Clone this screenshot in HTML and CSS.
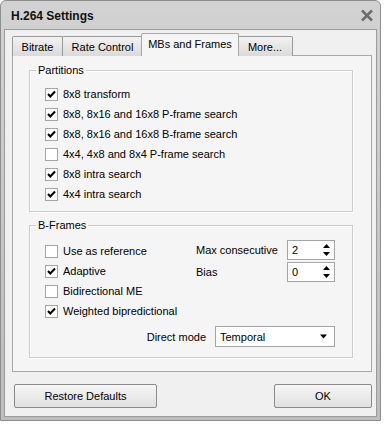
FILE: index.html
```html
<!DOCTYPE html>
<html>
<head>
<meta charset="utf-8">
<link rel="stylesheet" href="styles.css">
</head>
<body>
<div class="window">
  <div class="titlebar">
    <span class="title">H.264 Settings</span>
    <svg class="close" width="14" height="13" viewBox="0 0 14 13"><path d="M2 1.5 L12 11.5 M12 1.5 L2 11.5" stroke="#6e6e6e" stroke-width="2.6" fill="none"/></svg>
  </div>
  <div class="client">
    <div class="tabs">
      <div class="tab t1">Bitrate</div>
      <div class="tab t2">Rate Control</div>
      <div class="tab t3 sel">MBs and Frames</div>
      <div class="tab t4">More...</div>
    </div>
    <div class="panel">
      <fieldset class="group g1">
        <legend>Partitions</legend>
        <div class="rows">
          <label class="cb"><span class="box on"><svg width="11" height="11" viewBox="0 0 11 11"><path d="M2 5 L4.3 7.5 L9 2.5" stroke="#000" stroke-width="2" fill="none"/></svg></span>8x8 transform</label>
          <label class="cb"><span class="box on"><svg width="11" height="11" viewBox="0 0 11 11"><path d="M2 5 L4.3 7.5 L9 2.5" stroke="#000" stroke-width="2" fill="none"/></svg></span>8x8, 8x16 and 16x8 P-frame search</label>
          <label class="cb"><span class="box on"><svg width="11" height="11" viewBox="0 0 11 11"><path d="M2 5 L4.3 7.5 L9 2.5" stroke="#000" stroke-width="2" fill="none"/></svg></span>8x8, 8x16 and 16x8 B-frame search</label>
          <label class="cb"><span class="box"></span>4x4, 4x8 and 8x4 P-frame search</label>
          <label class="cb"><span class="box on"><svg width="11" height="11" viewBox="0 0 11 11"><path d="M2 5 L4.3 7.5 L9 2.5" stroke="#000" stroke-width="2" fill="none"/></svg></span>8x8 intra search</label>
          <label class="cb"><span class="box on"><svg width="11" height="11" viewBox="0 0 11 11"><path d="M2 5 L4.3 7.5 L9 2.5" stroke="#000" stroke-width="2" fill="none"/></svg></span>4x4 intra search</label>
        </div>
      </fieldset>
      <fieldset class="group g2">
        <legend>B-Frames</legend>
        <div class="bcols">
          <div class="rows left">
            <label class="cb"><span class="box"></span>Use as reference</label>
            <label class="cb"><span class="box on"><svg width="11" height="11" viewBox="0 0 11 11"><path d="M2 5 L4.3 7.5 L9 2.5" stroke="#000" stroke-width="2" fill="none"/></svg></span>Adaptive</label>
            <label class="cb"><span class="box"></span>Bidirectional ME</label>
            <label class="cb"><span class="box on"><svg width="11" height="11" viewBox="0 0 11 11"><path d="M2 5 L4.3 7.5 L9 2.5" stroke="#000" stroke-width="2" fill="none"/></svg></span>Weighted bipredictional</label>
          </div>
          <div class="right">
            <div class="field"><span>Max consecutive</span><div class="spin"><span>2</span><svg width="9" height="14" viewBox="0 0 9 14"><path d="M4.5 1 L8 5 L1 5 Z M1 9 L8 9 L4.5 13 Z" fill="#000"/></svg></div></div>
            <div class="field"><span>Bias</span><div class="spin"><span>0</span><svg width="9" height="14" viewBox="0 0 9 14"><path d="M4.5 1 L8 5 L1 5 Z M1 9 L8 9 L4.5 13 Z" fill="#000"/></svg></div></div>
          </div>
        </div>
        <div class="direct">
          <span>Direct mode</span>
          <div class="select"><span>Temporal</span><svg width="9" height="5" viewBox="0 0 9 5"><path d="M1 0.5 L8 0.5 L4.5 4.5 Z" fill="#000"/></svg></div>
        </div>
      </fieldset>
    </div>
    <div class="buttons">
      <button class="btn restore">Restore Defaults</button>
      <button class="btn ok">OK</button>
    </div>
  </div>
</div>
</body>
</html>
```

FILE: styles.css
```css
html, body {
  margin: 0;
  padding: 0;
  background: #ffffff;
}
body {
  font-family: "Liberation Sans", Arial, sans-serif;
  font-size: 11px;
  color: #000;
}
.window {
  width: 381px;
  height: 421px;
  box-sizing: border-box;
  background: linear-gradient(#d2d2d2, #bdbdbd);
  border: 1px solid #8e8e8e;
  border-radius: 6px 6px 0 0;
  padding: 0 3px 3px 3px;
  display: flex;
  flex-direction: column;
}
.titlebar {
  height: 28px;
  display: flex;
  align-items: center;
  justify-content: space-between;
  padding: 0 3px 0 7px;
  flex: none;
}
.title {
  font-weight: bold;
  font-size: 12px;
  color: #111;
  margin-top: 1px;
}
.close {
  margin-top: 1px;
}
.client {
  flex: 1;
  background: #f0f0f0;
  border: 1px solid #9b9b9b;
  padding: 4px 3px 0 7px;
  display: flex;
  flex-direction: column;
}
.tabs {
  display: flex;
  align-items: flex-end;
  height: 22px;
  margin-bottom: -1px;
  position: relative;
  z-index: 1;
}
.tab {
  box-sizing: border-box;
  height: 20px;
  border: 1px solid #9a9a9a;
  border-bottom: none;
  background: linear-gradient(#f2f2f2, #dadada);
  display: flex;
  align-items: center;
  justify-content: center;
  padding-top: 1px;
  border-radius: 2px 2px 0 0;
}
.t1 { width: 51px; }
.t2 { width: 81px; margin-left: -1px; }
.t3 { width: 98px; margin-left: -2px; }
.t4 { width: 56px; margin-left: -2px; }
.tab.sel {
  height: 23px;
  background: #f5f5f5;
  border-color: #a8a8a8;
  position: relative;
  z-index: 2;
  padding-bottom: 3px;
}
.panel {
  box-sizing: border-box;
  height: 317px;
  width: 360px;
  background: #f5f5f5;
  border: 1px solid #a8a8a8;
  padding: 8px 18px 0 16px;
}
.group {
  margin: 0;
  padding: 0;
  border: 1px solid #cdcdcd;
  box-shadow: inset 1px 1px 0 #fff, 1px 1px 0 #fff;
  min-width: 0;
}
.group legend {
  padding: 0 2px;
  margin-left: 6px;
  line-height: 13px;
}
.rows {
  display: flex;
  flex-direction: column;
}
.g1 .rows {
  padding: 7px 0 7px 15px;
}
.cb {
  height: 20px;
  display: flex;
  align-items: center;
}
.box {
  box-sizing: border-box;
  width: 13px;
  height: 13px;
  border: 1px solid #a5a5a5;
  background: #fff;
  margin-right: 5px;
  display: flex;
  align-items: center;
  justify-content: center;
}
.g2 {
  margin-top: 7px;
}
.bcols {
  display: flex;
  padding: 9px 0 0 15px;
}
.left {
  width: 151px;
}
.right {
  display: flex;
  flex-direction: column;
  gap: 1px;
  margin-top: -2px;
}
.field {
  display: flex;
  align-items: center;
  width: 139px;
  height: 21px;
  justify-content: space-between;
}
.spin {
  box-sizing: border-box;
  width: 48px;
  height: 20px;
  background: #fff;
  border: 1px solid #a5a5a5;
  display: flex;
  align-items: center;
  justify-content: space-between;
  padding: 0 3px 0 4px;
}
.direct {
  display: flex;
  justify-content: flex-end;
  align-items: center;
  padding: 5px 17px 10px 0;
  gap: 9px;
}
.select {
  box-sizing: border-box;
  width: 120px;
  height: 21px;
  background: #fff;
  border: 1px solid #a5a5a5;
  display: flex;
  align-items: center;
  justify-content: space-between;
  padding: 0 6px 0 4px;
}
.buttons {
  display: flex;
  justify-content: space-between;
  margin-top: 12px;
  padding-right: 1px;
}
.btn {
  box-sizing: border-box;
  height: 24px;
  font-family: "Liberation Sans", Arial, sans-serif;
  font-size: 11px;
  color: #000;
  background: linear-gradient(#f6f6f6, #e0e0e0);
  border: 1px solid #8a8a8a;
  border-radius: 2px;
  padding: 0;
  margin: 0;
}
.restore {
  width: 143px;
  margin-left: 2px;
}
.ok {
  width: 98px;
}
```
